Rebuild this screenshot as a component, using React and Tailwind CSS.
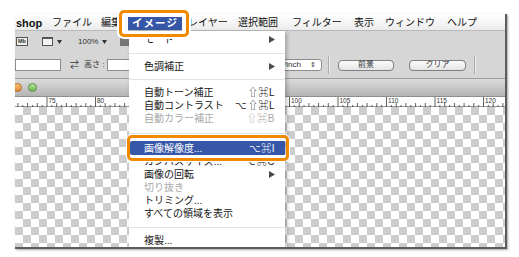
import React from "react";

const font = "font-['Liberation_Sans','Noto_Sans_CJK_JP',sans-serif]";

// menubar items after the app name, widths set the left edge of the next title
const menuTitles = [
  { label: "ファイル", w: "w-[49px]" },
  { label: "編集", w: "w-[27px]" },
];
const menuTitlesRight = [
  { label: "レイヤー", w: "w-[50px]" },
  { label: "選択範囲", w: "w-[54px]" },
  { label: "フィルター", w: "w-[62px]" },
  { label: "表示", w: "w-[31px]" },
  { label: "ウィンドウ", w: "w-[62px]" },
  { label: "ヘルプ", w: "w-[40px]" },
];

// dropdown rows: type sep has its own height
const menuRows = [
  { label: "モード", arrow: true },
  { sep: "h-[14px]" },
  { label: "色調補正", arrow: true },
  { sep: "h-[13px]" },
  { label: "自動トーン補正", key: "⇧⌘L" },
  { label: "自動コントラスト", key: "⌥⇧⌘L" },
  { label: "自動カラー補正", key: "⇧⌘B", disabled: true },
  { sep: "h-[16px]" },
  { label: "画像解像度...", key: "⌥⌘I", active: true },
  { label: "カンバスサイズ...", key: "⌥⌘C" },
  { label: "画像の回転", arrow: true },
  { label: "切り抜き", disabled: true },
  { label: "トリミング..." },
  { label: "すべての領域を表示" },
  { sep: "h-[14px]" },
  { label: "複製..." },
];

const Arrow = () => (
  <svg width="6" height="7" viewBox="0 0 6 7">
    <polygon points="0,0 6,3.5 0,7" fill="#4a4a4a" />
  </svg>
);

const Caret = () => (
  <svg width="5" height="4" viewBox="0 0 5 4" className="ml-[4px]">
    <polygon points="0,0 5,0 2.5,4" fill="#333" />
  </svg>
);

const Ruler = () => {
  const ticks = [];
  for (let i = 0; i <= 102; i++) {
    const u = 71.5 + i * 0.5;
    const x = 32 + (u - 75) * 9.7;
    const major = u % 5 === 0;
    const unit = u % 1 === 0;
    ticks.push(
      <line
        key={i}
        x1={x}
        x2={x}
        y1={major ? 0 : unit ? 6 : 8}
        y2={10}
        stroke="#3a3a3a"
        strokeWidth="0.8"
      />
    );
    // labels under the open menu are never seen
    if (major && (x < 100 || x > 272))
      ticks.push(
        <text
          key={`t${i}`}
          x={x + 1.5}
          y={6}
          fontSize="6.5"
          fill="#333"
          fontFamily="Liberation Sans, sans-serif"
        >
          {u}
        </text>
      );
  }
  return (
    <svg width="490" height="10" viewBox="0 0 490 10" className="block">
      {ticks}
    </svg>
  );
};

export default function App() {
  return (
    <div className={`relative w-[519px] h-[257px] bg-white overflow-hidden pt-[14px] pl-[15px] ${font}`}>
      {/* screen frame */}
      <div className="relative w-[492px] h-[235px] border-r-2 border-b-2 border-[#5c5c5c] shadow-[1px_1px_2px_rgba(0,0,0,0.35)] flex flex-col overflow-hidden">
        {/* menubar */}
        <div className="h-[17px] shrink-0 flex items-end bg-gradient-to-b from-[#ffffff] to-[#ececec] border-b border-[#b9b9b9] text-[10px] text-[#111]">
          <span className="w-[37px] pl-[1px] h-[14px] leading-[14px] text-[11px] font-bold">shop</span>
          {menuTitles.map((m) => (
            <span key={m.label} className={`${m.w} h-[14px] leading-[14px]`}>
              {m.label}
            </span>
          ))}
          <span className="w-[54px] h-[14px] leading-[14px] bg-[#3657a7] text-white text-center font-bold text-[10.5px] tracking-[1px]">
            イメージ
          </span>
          <span className="w-[6px]" />
          {menuTitlesRight.map((m) => (
            <span key={m.label} className={`${m.w} h-[14px] leading-[14px]`}>
              {m.label}
            </span>
          ))}
        </div>

        {/* options bar */}
        <div className="h-[48px] shrink-0 bg-[#d6d6d6] border-b border-[#9c9c9c] flex flex-col text-[#333]">
          <div className="h-[22px] flex items-center">
            <div className="ml-[1px] w-[12px] h-[9px] border border-[#555] bg-[#eee] text-[5.5px] leading-[7px] font-bold text-center">
              Mb
            </div>
            <div className="ml-[14px] w-[11px] h-[9px] border border-[#555] border-t-2 bg-[#f4f4f4]" />
            <Caret />
            <span className="ml-[16px] text-[8px]">100%</span>
            <Caret />
            <div className="ml-[13px] w-[9px] h-[8px] bg-[#777]" />
          </div>
          <div className="h-[26px] flex items-center text-[8px]">
            <div className="w-[235px] shrink-0 flex items-center">
              <div className="w-[46px] h-[12px] bg-white border border-[#8d8d8d]" />
              <span className="ml-[9px] text-[9px]">⇄</span>
              <span className="ml-[5px]">高さ :</span>
              <div className="ml-[3px] w-[60px] h-[12px] bg-white border border-[#8d8d8d]" />
            </div>
            <div className="w-[72px] h-[12px] bg-white border border-[#8d8d8d] rounded-[3px] flex items-center justify-end pr-[5px] gap-[9px]">
              <span>pixel/inch</span>
              <span className="text-[7px]">⇕</span>
            </div>
            <div className="ml-[6px] w-px h-[18px] bg-[#a9a9a9] shadow-[1px_0_0_#ececec]" />
            <div className="ml-[9px] w-[56px] h-[11px] rounded-[4px] border border-[#7f7f7f] bg-gradient-to-b from-[#fdfdfd] to-[#e4e4e4] flex items-center justify-center">
              前景
            </div>
            <div className="ml-[15px] w-[57px] h-[11px] rounded-[4px] border border-[#7f7f7f] bg-gradient-to-b from-[#fdfdfd] to-[#e4e4e4] flex items-center justify-center">
              クリア
            </div>
            <div className="ml-[8px] w-px h-[18px] bg-[#a9a9a9] shadow-[1px_0_0_#ececec]" />
          </div>
        </div>

        {/* document title bar */}
        <div className="h-[18px] shrink-0 bg-gradient-to-b from-[#dcdcdc] to-[#b4b4b4] border-b border-[#8e8e8e] flex items-center">
          <div className="-ml-[2px] w-[9px] h-[9px] rounded-full bg-gradient-to-b from-[#f7c274] to-[#e0892b] border border-[#b46c21]" />
          <div className="ml-[6px] w-[9px] h-[9px] rounded-full bg-gradient-to-b from-[#b9e3a0] to-[#6fb752] border border-[#55913f]" />
        </div>

        {/* ruler */}
        <div className="h-[10px] shrink-0 bg-white border-b border-[#9a9a9a]">
          <Ruler />
        </div>

        {/* transparent canvas */}
        <div className="flex-1 bg-[conic-gradient(#cdcdcd_25%,#ffffff_0_50%,#cdcdcd_0_75%,#ffffff_0)] bg-[length:16px_16px]" />

        {/* image menu */}
        <div className="absolute left-[114px] top-[17px] bottom-0 w-[156px] bg-white pt-[2px] shadow-[2px_2px_4px_rgba(0,0,0,0.25)] text-[10px]">
          {menuRows.map((r, i) =>
            r.sep ? (
              <div key={i} className={`${r.sep} flex items-center`}>
                <div className="w-full h-px bg-[#e3e3e3]" />
              </div>
            ) : (
              <div
                key={i}
                className={`flex items-center justify-between pl-[15px] pr-[10px] ${
                  r.active ? "h-[14px] bg-[#3657a7] text-white" : "h-[13px]"
                } ${r.disabled ? "text-[#a8a8a8]" : r.active ? "" : "text-[#161616]"}`}
              >
                <span className="leading-[13px]">{r.label}</span>
                {r.arrow && <Arrow />}
                {r.key && <span className="leading-[13px] tracking-[0.5px]">{r.key}</span>}
              </div>
            )
          )}
        </div>
      </div>

      {/* callout around the menu title */}
      <div className="absolute left-[119px] top-[10px] w-[70px] h-[27px] border-[3px] border-[#f18a00] rounded-[5px] shadow-[0_0_0_2px_#ffffff,inset_6px_0_0_#ffffff,inset_-4px_0_0_#ffffff,inset_0_4px_0_#ffffff,inset_0_-3px_0_#ffffff]" />
      {/* callout around the image size item */}
      <div className="absolute left-[127px] top-[135px] w-[162px] h-[26px] border-[3px] border-[#f18a00] rounded-[5px] shadow-[0_0_0_1px_#ffffff,inset_0_3px_0_#ffffff,inset_0_-3px_0_#ffffff]" />
    </div>
  );
}
